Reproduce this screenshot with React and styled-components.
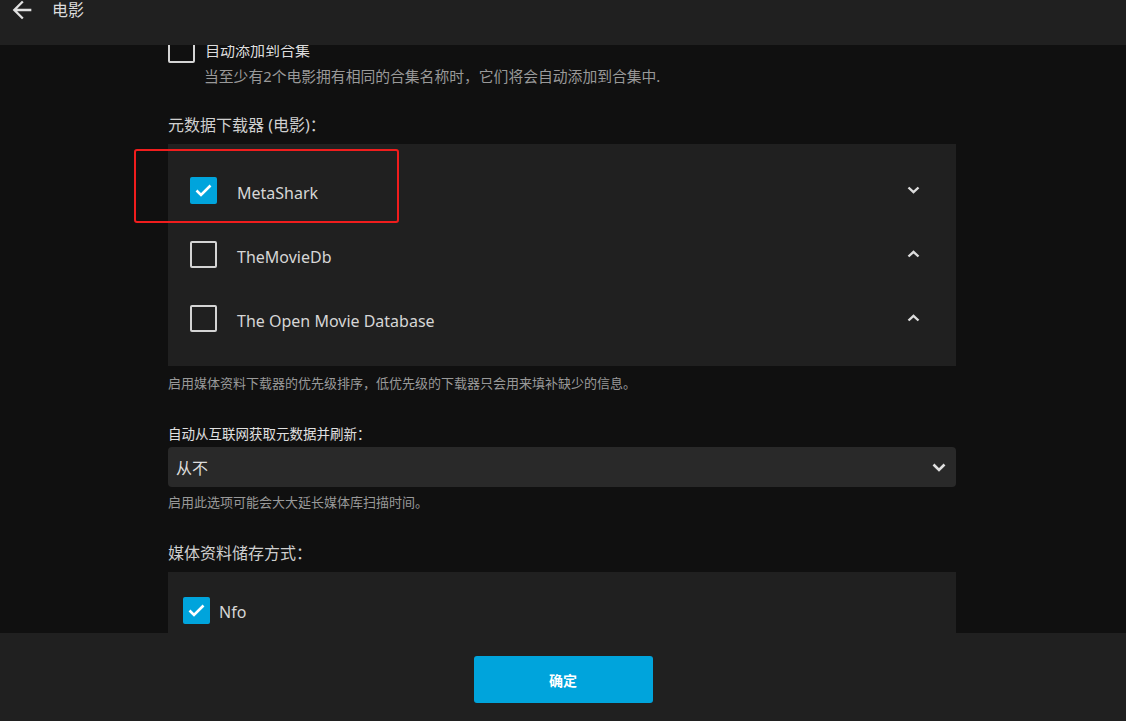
import React from 'react'
import styled, { createGlobalStyle } from 'styled-components'

const GlobalStyle = createGlobalStyle`
  html, body {
    margin: 0;
    padding: 0;
    background: #101010;
    overflow: hidden;
  }
  body {
    font-family: "Noto Sans", "Noto Sans CJK SC", sans-serif;
    color: #ddd;
  }
`

const downloaders = [
  { name: 'MetaShark', checked: true, open: true },
  { name: 'TheMovieDb', checked: false, open: false },
  { name: 'The Open Movie Database', checked: false, open: false },
]

function Chevron({ up }) {
  return (
    <svg width="13" height="8" viewBox="0 0 13 8">
      <polyline
        points={up ? '1.5,6.5 6.5,1.8 11.5,6.5' : '1.5,1.5 6.5,6.2 11.5,1.5'}
        fill="none"
        stroke="#dcdcdc"
        strokeWidth="2.4"
      />
    </svg>
  )
}

function CheckBox({ checked }) {
  return (
    <Box checked={checked}>
      {checked && (
        <svg width="19" height="15" viewBox="0 0 19 15">
          <polyline points="2.5,7.5 7,12 16.5,2.5" fill="none" stroke="#fff" strokeWidth="2.6" />
        </svg>
      )}
    </Box>
  )
}

function App() {
  return (
    <>
      <GlobalStyle />
      <Page>
        <Header>
          <BackButton>
            <svg width="28" height="28" viewBox="0 0 24 24">
              <path fill="#e0e0e0" d="M20 11H7.83l5.59-5.59L12 4l-8 8 8 8 1.41-1.41L7.83 13H20v-2z" />
            </svg>
          </BackButton>
          <Title>电影</Title>
        </Header>

        <ScrollArea>
          <Content>
            <CheckRow>
              <CheckBox checked={false} />
              <CheckLabel>自动添加到合集</CheckLabel>
            </CheckRow>
            <CheckHint>当至少有2个电影拥有相同的合集名称时，它们将会自动添加到合集中.</CheckHint>

            <SectionLabel top="28px">元数据下载器 (电影)：</SectionLabel>
            <Panel>
              {downloaders.map(d => (
                <ListRow key={d.name}>
                  <CheckBox checked={d.checked} />
                  <RowName>{d.name}</RowName>
                  <Chevron up={!d.open} />
                </ListRow>
              ))}
              <Highlight />
            </Panel>
            <Hint top="8px">启用媒体资料下载器的优先级排序，低优先级的下载器只会用来填补缺少的信息。</Hint>

            <SelectLabel>自动从互联网获取元数据并刷新：</SelectLabel>
            <Select>
              <span>从不</span>
              <svg width="14" height="9" viewBox="0 0 14 9">
                <polyline points="1.5,1.5 7,7 12.5,1.5" fill="none" stroke="#e0e0e0" strokeWidth="2.6" />
              </svg>
            </Select>
            <Hint top="6px">启用此选项可能会大大延长媒体库扫描时间。</Hint>

            <SectionLabel top="31px">媒体资料储存方式：</SectionLabel>
            <SmallPanel>
              <SaverRow>
                <CheckBox checked />
                <SaverName>Nfo</SaverName>
              </SaverRow>
            </SmallPanel>
          </Content>
        </ScrollArea>

        <Footer>
          <SubmitButton>确定</SubmitButton>
        </Footer>
      </Page>
    </>
  )
}

export default App

const Page = styled.div`
  height: 100vh;
  display: flex;
  flex-direction: column;
`

const Header = styled.div`
  height: 45px;
  flex-shrink: 0;
  background: #202020;
  display: flex;
  align-items: flex-start;
  position: relative;
  z-index: 2;
`

const BackButton = styled.div`
  width: 28px;
  height: 28px;
  margin: -4px 0 0 8px;
  display: flex;
`

const Title = styled.div`
  margin-left: 16px;
  font-size: 16px;
  line-height: 20px;
  color: #dcdcdc;
`

const ScrollArea = styled.div`
  flex: 1;
  overflow: hidden;
  background: #101010;
`

const Content = styled.div`
  width: 788px;
  margin-left: 168px;
  display: flex;
  flex-direction: column;
`

const CheckRow = styled.div`
  display: flex;
  align-items: center;
  gap: 10px;
  height: 26px;
  margin-top: -9px;
`

const Box = styled.div`
  width: 27px;
  height: 27px;
  box-sizing: border-box;
  flex-shrink: 0;
  border-radius: 2px;
  display: flex;
  align-items: center;
  justify-content: center;
  background: ${p => (p.checked ? '#00a4dc' : 'transparent')};
  border: ${p => (p.checked ? 'none' : '2px solid #d4d4d4')};
`

const CheckLabel = styled.span`
  font-size: 15px;
  color: #ddd;
`

const CheckHint = styled.div`
  margin: 4px 0 0 36px;
  font-size: 14.8px;
  line-height: 20px;
  color: #999;
`

const SectionLabel = styled.div`
  margin-top: ${p => p.top};
  font-size: 16px;
  line-height: 22px;
  color: #cfcfcf;
`

const Panel = styled.div`
  position: relative;
  margin-top: 8px;
  background: #202020;
  padding: 14px 0 16px;
`

const ListRow = styled.div`
  height: 64px;
  display: flex;
  align-items: center;
  padding: 0 36px 0 22px;
`

const RowName = styled.span`
  flex: 1;
  margin-left: 20px;
  padding-top: 6px;
  font-size: 16px;
  color: #d6d6d6;
`

const Highlight = styled.div`
  position: absolute;
  left: -34px;
  top: 5px;
  width: 265px;
  height: 74px;
  box-sizing: border-box;
  border: 2.5px solid #f01d1d;
  border-radius: 3px;
  pointer-events: none;
`

const Hint = styled.div`
  margin-top: ${p => p.top};
  font-size: 13px;
  line-height: 18px;
  color: #999;
`

const SelectLabel = styled.div`
  margin-top: 33px;
  font-size: 13.5px;
  line-height: 18px;
  color: #e0e0e0;
`

const Select = styled.div`
  margin-top: 4px;
  height: 40px;
  background: #292929;
  border-radius: 4px;
  display: flex;
  align-items: center;
  justify-content: space-between;
  padding: 0 10px 0 8px;
  font-size: 16px;
  color: #dcdcdc;
`

const SmallPanel = styled.div`
  margin-top: 8px;
  background: #202020;
  padding: 18px 0 20px;
`

const SaverRow = styled.div`
  height: 40px;
  display: flex;
  align-items: center;
  padding-left: 15px;
`

const SaverName = styled.span`
  margin-left: 9px;
  padding-top: 3px;
  font-size: 16px;
  color: #d6d6d6;
`

const Footer = styled.div`
  height: 88px;
  flex-shrink: 0;
  background: #202020;
  display: flex;
  justify-content: center;
  padding-top: 23px;
  box-sizing: border-box;
`

const SubmitButton = styled.div`
  width: 179px;
  height: 47px;
  background: #00a4dc;
  border-radius: 3px;
  display: flex;
  align-items: center;
  justify-content: center;
  color: #fff;
  font-size: 14px;
  font-weight: bold;
`
